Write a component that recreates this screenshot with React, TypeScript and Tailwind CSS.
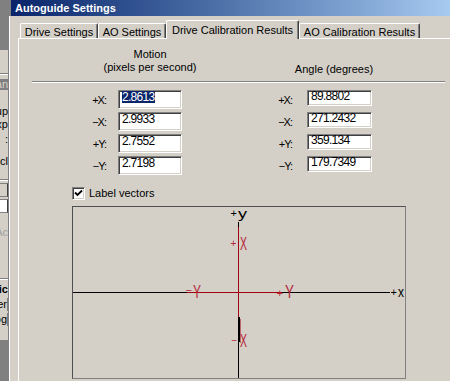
import React from "react";

const motion = [
  { label: "+X:", value: "2.8613", selected: true },
  { label: "−X:", value: "2.9933", selected: false },
  { label: "+Y:", value: "2.7552", selected: false },
  { label: "−Y:", value: "2.7198", selected: false },
];

const angle = [
  { label: "+X:", value: "89.8802" },
  { label: "−X:", value: "271.2432" },
  { label: "+Y:", value: "359.134" },
  { label: "−Y:", value: "179.7349" },
];

const sunken =
  "border border-t-[#808080] border-l-[#808080] border-b-white border-r-white shadow-[inset_1px_1px_0_#404040,inset_-1px_-1px_0_#d4d0c8] bg-white";

const Snip = ({ text, className }: { text: string; className: string }) => (
  <div className={`flex justify-end whitespace-nowrap ${className}`}>{text}</div>
);

// bits of the window sitting behind the dialog
const BackWindow = () => (
  <div className="w-[8px] shrink-0 flex flex-col overflow-hidden text-[11px] leading-[13px] text-black">
    <div className="h-[50px] bg-[#808080]" />
    <div className="h-[23px]" />
    <div className="h-[2px] border-t border-[#808080] border-b border-b-white" />
    <div className="h-[4px]" />
    <Snip text="Scan" className="h-[11px] leading-[11px] bg-[#808080] text-[#d4d0c8]" />
    <div className="h-[15px]" />
    <Snip text="Setup" className="h-[13px]" />
    <Snip text="Exp" className="h-[13px]" />
    <div className="h-[2px]" />
    <Snip text=":" className="h-[13px]" />
    <div className="h-[9px]" />
    <Snip text="Excl" className="h-[13px]" />
    <div className="h-[11px]" />
    <div className="h-[2px] border-t border-[#808080] border-b border-b-white" />
    <div className="h-[2px]" />
    <div className="h-[14px] border-y border-r border-y-[#808080] border-r-[#404040]" />
    <div className="h-[2px]" />
    <div className="h-[14px] border-y border-r border-y-[#808080] border-r-[#404040] bg-white" />
    <div className="h-[13px]" />
    <Snip text="Ac" className="h-[13px] text-[#a0a0a0]" />
    <div className="h-[39px]" />
    <div className="h-[2px] border-t border-[#808080] border-b border-b-white" />
    <div className="h-[3px]" />
    <Snip text="Graphic" className="h-[13px] font-bold" />
    <div className="h-[2px]" />
    <Snip text="Filter" className="h-[13px] border-r border-[#808080]" />
    <div className="h-[2px]" />
    <Snip text="Log" className="h-[13px] border-r border-[#808080]" />
    <div className="h-[14px]" />
    <div className="flex-1 bg-[#808080]" />
  </div>
);

const tabs = [
  { name: "Drive Settings", cls: "w-[78px]" },
  { name: "AO Settings", cls: "w-[68px]" },
  { name: "Drive Calibration Results", cls: "w-[133px]", active: true },
  { name: "AO Calibration Results", cls: "w-[121px]" },
];

const Tabs = () => (
  <div className="mt-[4px] h-[18px] pl-[2px] flex items-end">
    {tabs.map((t) =>
      t.active ? (
        <div
          key={t.name}
          className={`${t.cls} h-[19px] -mb-[1px] relative z-10 bg-[#d4d0c8] border-t border-l border-white border-r border-r-[#404040] shadow-[inset_-1px_0_0_#808080] rounded-t-[2px] pt-[3px] text-center leading-[13px] whitespace-nowrap`}
        >
          {t.name}
        </div>
      ) : (
        <div
          key={t.name}
          className={`${t.cls} h-[15px] border-t border-l border-white border-r border-r-[#404040] shadow-[inset_-1px_0_0_#808080] rounded-t-[2px] pt-[2px] text-center leading-[13px] whitespace-nowrap`}
        >
          {t.name}
        </div>
      )
    )}
  </div>
);

const red = "#a00010";
const redText = "#b4283a";
const fam = "Liberation Sans, Arial, sans-serif";

const Chart = () => (
  <div className="ml-[53px] mt-[6px] w-[334px] h-[173px] border border-t-[#505050] border-l-[#505050] border-r-[#808080] border-b-[#808080]">
    <svg width="332" height="171" className="block" fontFamily={fam}>
      <g shapeRendering="crispEdges">
        <line x1="0" y1="85.5" x2="317" y2="85.5" stroke="#000" />
        <line x1="165.5" y1="15" x2="165.5" y2="171" stroke="#000" />
        <line x1="114" y1="85.5" x2="209" y2="85.5" stroke={red} />
        <line x1="165.5" y1="20" x2="165.5" y2="110" stroke={red} />
        <line x1="166.5" y1="110" x2="166.5" y2="135" stroke="#000" />
        <line x1="167.5" y1="112" x2="167.5" y2="136" stroke={red} strokeOpacity="0.5" />
      </g>

      {/* axis labels */}
      <text x="157.5" y="9.5" fontSize="11" fill="#000">+</text>
      <text x="165" y="11" fontSize="13" fill="#000" textLength="9" lengthAdjust="spacingAndGlyphs">y</text>
      <text x="317.5" y="89" fontSize="11" fill="#000">+</text>
      <text x="325" y="90" fontSize="14" fill="#000" textLength="6" lengthAdjust="spacingAndGlyphs">x</text>

      {/* vector labels */}
      <text x="157.5" y="39.5" fontSize="10" fill={redText}>+</text>
      <text x="167" y="43" fontSize="18" fill={redText} textLength="7" lengthAdjust="spacingAndGlyphs">X</text>
      <text x="112.5" y="86.5" fontSize="11" fill={redText}>−</text>
      <text x="120" y="91" fontSize="18" fill={redText} textLength="8" lengthAdjust="spacingAndGlyphs">Y</text>
      <text x="203.5" y="89.5" fontSize="11" fill={redText}>+</text>
      <text x="212" y="91" fontSize="18" fill={redText} textLength="9" lengthAdjust="spacingAndGlyphs">Y</text>
      <text x="158.5" y="137" fontSize="10" fill={redText}>−</text>
      <text x="167" y="140" fontSize="18" fill={redText} textLength="7" lengthAdjust="spacingAndGlyphs">X</text>
    </svg>
  </div>
);

const CalibrationPanel = () => (
  <div className="flex-1 flex flex-col border-t border-l border-white">
    <div className="flex pt-[9px]">
      <div className="ml-[81px] w-[100px] text-center leading-[13px] whitespace-nowrap">
        <div>Motion</div>
        <div>(pixels per second)</div>
      </div>
      <div className="ml-[84px] w-[100px] pt-[15px] text-center leading-[13px] whitespace-nowrap">
        Angle (degrees)
      </div>
    </div>
    <div className="mt-[5px] ml-[13px] w-[413px] h-[2px] border-t border-[#808080] border-b border-b-white" />

    <div className="mt-[7px] flex flex-col gap-[3px]">
      {motion.map((m, i) => (
        <div key={m.label} className="flex h-[19px] items-center">
          <div className="w-[87px] text-right tracking-[-1px] leading-[13px] pt-[2px]">{m.label}</div>
          <div className={`ml-[12px] w-[64px] h-[19px] self-start pl-[3px] text-[12px] leading-[12px] tracking-[-0.7px] ${sunken}`}>
            {m.selected ? (
              <span className="inline-block h-[12px] bg-[#0a246a] text-white">{m.value}</span>
            ) : (
              m.value
            )}
          </div>
          <div className="w-[110px] text-right tracking-[-1px] leading-[13px] pt-[2px]">{angle[i].label}</div>
          <div className={`ml-[15px] w-[65px] h-[16px] self-start pl-[3px] text-[12px] leading-[11px] tracking-[-0.7px] ${sunken}`}>
            {angle[i].value}
          </div>
        </div>
      ))}
    </div>

    <div className="mt-[12px] ml-[53px] flex items-center gap-[4px]">
      <div className={`w-[13px] h-[13px] flex items-center justify-center ${sunken}`}>
        <svg width="9" height="9" viewBox="0 0 9 9" className="block">
          <path d="M1 3.5 L3.5 6 L8 1.5" fill="none" stroke="#000" strokeWidth="1.8" />
        </svg>
      </div>
      <div className="leading-[13px]">Label vectors</div>
    </div>

    <Chart />
  </div>
);

export default function App() {
  return (
    <div className="w-[450px] h-[381px] flex overflow-hidden bg-[#d4d0c8] text-black text-[11px] font-['Liberation_Sans',Arial,sans-serif]">
      <BackWindow />
      <div className="flex-1 flex flex-col">
        <div className="h-[16px] bg-[#808080] pl-[3px] flex">
          <div className="flex-1 bg-gradient-to-r from-[#0a246a] to-[#a6caf0] pl-[4px] text-white font-bold leading-[16px] whitespace-nowrap">
            Autoguide Settings
          </div>
        </div>
        <div className="flex-1 flex border-l border-[#808080]">
          <div className="flex-1 flex border-l border-white pl-[8px]">
            <div className="flex-1 flex flex-col">
              <Tabs />
              <CalibrationPanel />
            </div>
          </div>
        </div>
      </div>
    </div>
  );
}
